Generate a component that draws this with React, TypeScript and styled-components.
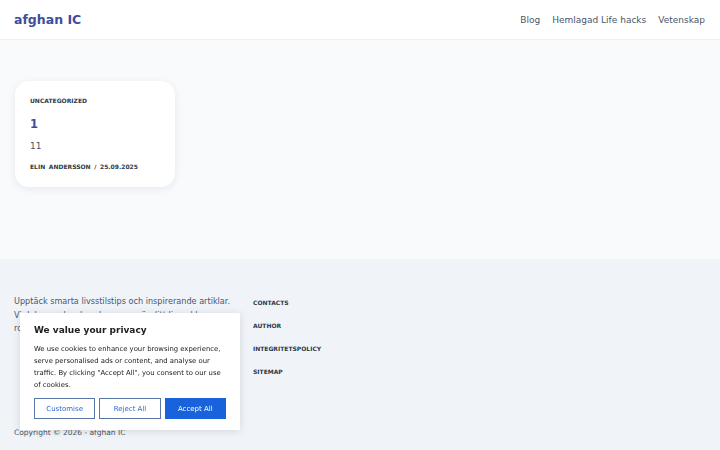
import React from 'react';
import styled, { createGlobalStyle } from 'styled-components';

const GlobalStyle = createGlobalStyle`
  html, body { margin: 0; padding: 0; }
  body {
    font-family: "DejaVu Sans", "Liberation Sans", sans-serif;
    background: #f0f4f8;
    color: #2d3748;
  }
`;

// ─── Header ────────────────────────────────────────────────────────────────
const Header = styled.header`
  height: 40px;
  box-sizing: border-box;
  display: flex; align-items: center; justify-content: space-between;
  padding: 0 15px 0 14px;
  background: #fff;
  border-bottom: 1px solid #edf0f4;
`;
const Logo = styled.a`
  font-size: 12.5px; font-weight: 700;
  color: #3d4f9c; text-decoration: none;
`;
const Nav = styled.nav`
  display: flex; gap: 12px;
`;
const NavLink = styled.a`
  font-size: 9px; color: #4a5568; text-decoration: none;
`;

// ─── Main ──────────────────────────────────────────────────────────────────
const Main = styled.main`
  height: 219px;
  box-sizing: border-box;
  padding: 41px 15px;
  background: #f8fafc;
`;
const Card = styled.article`
  width: 160px; box-sizing: border-box;
  padding: 16px 15px 16px;
  background: #fff;
  border-radius: 14px;
  box-shadow: 0 2px 8px rgba(30, 41, 59, 0.08);
  display: flex; flex-direction: column;
`;
const Caps = styled.span`
  font-size: 6px; font-weight: 700; line-height: 8px;
  color: #2d3748; text-transform: uppercase;
`;
const Meta = styled(Caps)`
  margin-top: 11px;
  word-spacing: 1.5px;
`;
const CardTitle = styled.h2`
  margin: 12px 0 0; font-size: 11.5px; line-height: 14px;
  font-weight: 700; color: #3d4f9c;
`;
const Excerpt = styled.p`
  margin: 9px 0 0; font-size: 9px; line-height: 12px; color: #4a5568;
`;

// ─── Footer ────────────────────────────────────────────────────────────────
const Footer = styled.footer`
  height: 191px; box-sizing: border-box;
  padding: 35px 14px 0;
  background: #f0f4f8;
  display: flex; flex-direction: column;
`;
const FooterGrid = styled.div`
  display: grid; grid-template-columns: 222px 1fr 1fr; gap: 17px;
`;
const About = styled.p`
  margin: 1px 0 0; font-size: 8.15px; line-height: 13.5px; color: #4a5568;
`;
const Links = styled.ul`
  list-style: none; margin: 0; padding: 5px 0 0;
  display: flex; flex-direction: column; gap: 15px;
`;
const LinkItem = styled.li`
  font-size: 6px; font-weight: 700; line-height: 8px;
  color: #2d3748; text-transform: uppercase;
`;
const Copyright = styled.p`
  margin: auto 0 12px; font-size: 7.5px; line-height: 10px; color: #4a5568;
`;

// ─── Cookie banner ─────────────────────────────────────────────────────────
const Cookie = styled.div`
  position: fixed; left: 20px; bottom: 20px;
  width: 220px; box-sizing: border-box;
  padding: 11px 14px 11px;
  background: #fff;
  box-shadow: 0 1px 8px rgba(0, 0, 0, 0.12);
`;
const CookieTitle = styled.h3`
  margin: 0; font-size: 9px; line-height: 12px; font-weight: 700; color: #212121;
`;
const CookieText = styled.p`
  margin: 7px 0 0; font-size: 6.85px; line-height: 12px; color: #212121;
`;
const Buttons = styled.div`
  display: flex; gap: 4px; margin-top: 7px;
`;
const Btn = styled.button<{ $primary?: boolean }>`
  flex: 1; height: 21px; padding: 0;
  font-family: inherit; font-size: 7px;
  border: 1.5px solid ${p => (p.$primary ? '#1863dc' : '#5876a8')};
  background: ${p => (p.$primary ? '#1863dc' : '#fff')};
  color: ${p => (p.$primary ? '#fff' : '#2f6ad6')};
  cursor: pointer;
`;

export default function App() {
  return (
    <>
      <GlobalStyle />
      <Header>
        <Logo href="#">afghan IC</Logo>
        <Nav>
          <NavLink href="#">Blog</NavLink>
          <NavLink href="#">Hemlagad Life hacks</NavLink>
          <NavLink href="#">Vetenskap</NavLink>
        </Nav>
      </Header>
      <Main>
        <Card>
          <Caps>Uncategorized</Caps>
          <CardTitle>1</CardTitle>
          <Excerpt>11</Excerpt>
          <Meta>Elin Andersson / 25.09.2025</Meta>
        </Card>
      </Main>
      <Footer>
        <FooterGrid>
          <About>
            Upptäck smarta livsstilstips och inspirerande artiklar. Vi delar vardagskunskap som gör ditt liv enklare, roligare och mer inspirerande.
          </About>
          <Links>
            <LinkItem>Contacts</LinkItem>
            <LinkItem>Author</LinkItem>
            <LinkItem>Integritetspolicy</LinkItem>
            <LinkItem>Sitemap</LinkItem>
          </Links>
          <div />
        </FooterGrid>
        <Copyright>Copyright © 2026 - afghan IC</Copyright>
      </Footer>
      <Cookie>
        <CookieTitle>We value your privacy</CookieTitle>
        <CookieText>
          We use cookies to enhance your browsing experience, serve personalised ads or content, and analyse our traffic. By clicking "Accept All", you consent to our use of cookies.
        </CookieText>
        <Buttons>
          <Btn>Customise</Btn>
          <Btn>Reject All</Btn>
          <Btn $primary>Accept All</Btn>
        </Buttons>
      </Cookie>
    </>
  );
}
